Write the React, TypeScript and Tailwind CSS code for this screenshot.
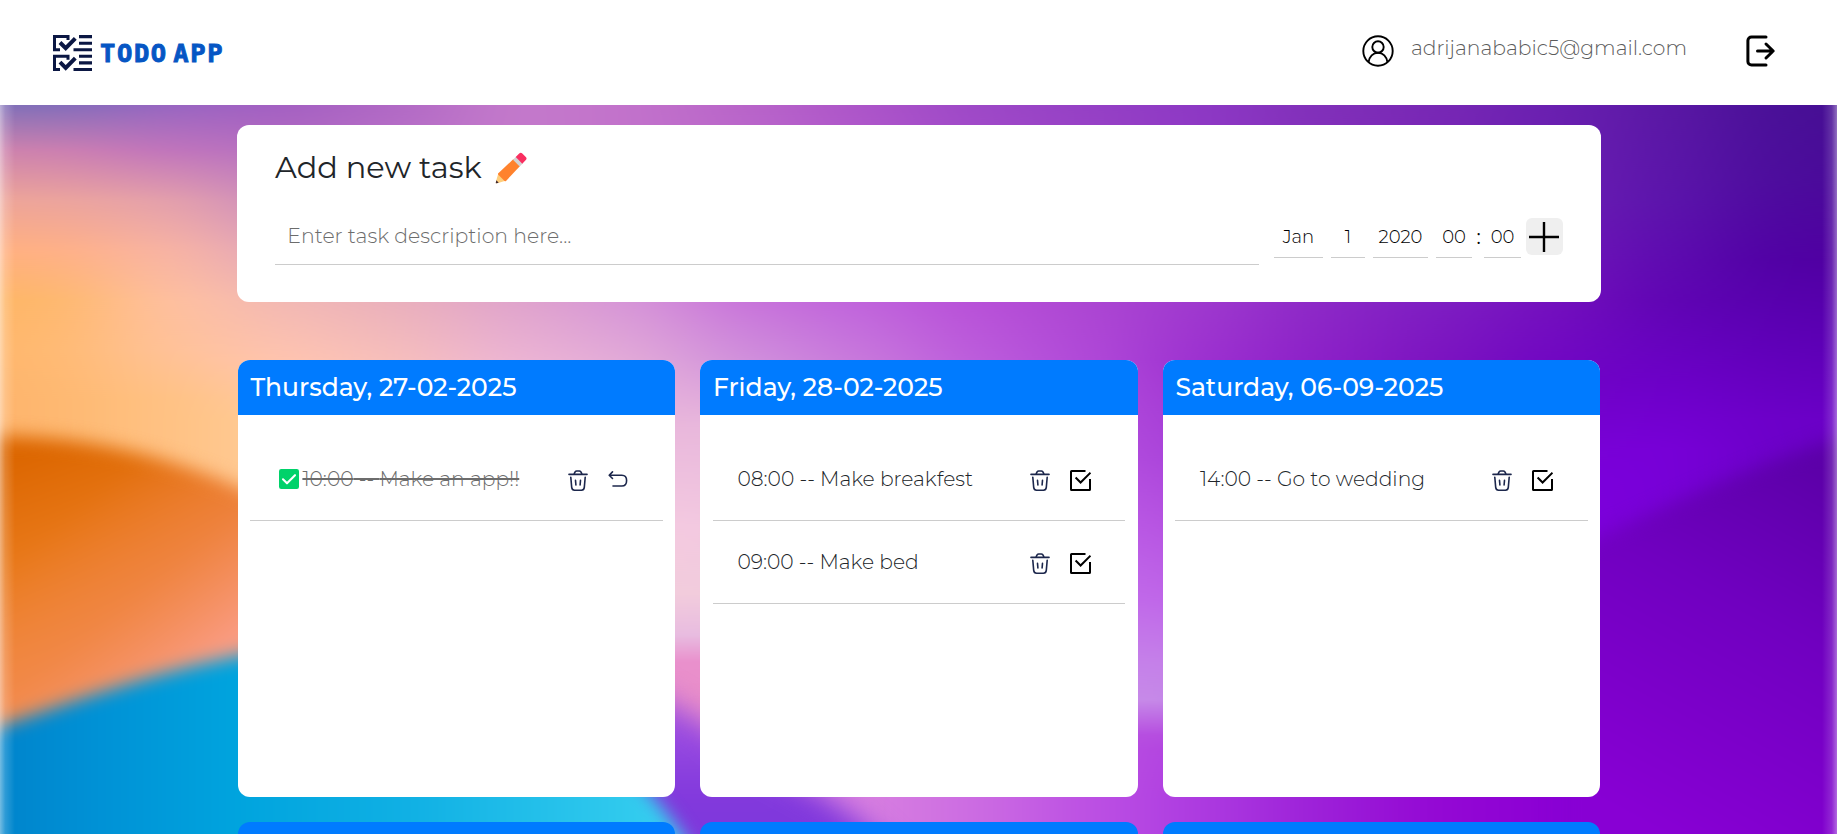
import { type ReactNode } from "react";

/* Colour columns of the backdrop: x centre and vertical colour stops. */
const COLUMNS: { x: number; stops: [number, string][] }[] = [
  { x: -60, stops: [[100, "#7670b8"], [150, "#cc84a8"], [200, "#eea494"], [250, "#ffb07c"], [300, "#feb462"], [350, "#ffb468"], [400, "#fdb068"]] },
  { x: 55, stops: [[100, "#7a6cba"], [150, "#cc80b0"], [200, "#eca49c"], [250, "#ffb085"], [300, "#feb86c"], [350, "#ffba72"], [400, "#feb870"]] },
  { x: 170, stops: [[100, "#9464c2"], [150, "#c074bc"], [200, "#e4a0ac"], [250, "#f8b4a4"], [300, "#ffc0a0"], [350, "#ffc298"], [400, "#ffc284"]] },
  { x: 285, stops: [[100, "#a25ec2"], [125, "#aa64c2"], [250, "#e0a4bc"], [300, "#f2b8b4"], [360, "#ffc4b0"], [420, "#ffcc98"]] },
  { x: 400, stops: [[100, "#b068c4"], [125, "#b46cc6"], [250, "#dca0c0"], [302, "#eab0bc"], [360, "#f6bebc"]] },
  { x: 515, stops: [[100, "#c47acb"], [125, "#c47acb"], [250, "#d498d0"], [302, "#e0a4cc"], [360, "#ecb4d4"]] },
  { x: 630, stops: [[100, "#c272cb"], [125, "#c272cb"], [250, "#cc84d0"], [302, "#d696d8"], [360, "#e2aad8"], [526, "#f4cae0"], [594, "#f2ccdc"], [635, "#e8bce0"], [662, "#ea90cc"], [800, "#e88cc8"]] },
  { x: 745, stops: [[100, "#b864c8"], [302, "#c874da"], [360, "#d090dc"], [425, "#e8b8dc"], [526, "#f2c8e0"], [594, "#f2ccdc"], [635, "#e8bce0"], [662, "#e890cc"], [700, "#e88cc8"], [800, "#dc84e0"]] },
  { x: 860, stops: [[100, "#ac54c8"], [302, "#c064dc"], [360, "#c878dc"], [700, "#e08cdc"], [800, "#d880e0"]] },
  { x: 975, stops: [[100, "#9c48c6"], [302, "#b850d8"], [360, "#bc5cdc"], [700, "#d080e0"], [800, "#cc6ce2"]] },
  { x: 1090, stops: [[100, "#9440c4"], [302, "#ac46d2"], [360, "#b048d8"], [459, "#b450de"], [526, "#bc5ce6"], [600, "#c26cea"], [662, "#c680ea"], [700, "#c88ae8"], [735, "#b850e0"], [800, "#bc50e4"]] },
  { x: 1205, stops: [[100, "#8c38c4"], [302, "#9e38ce"], [360, "#9c30d0"], [459, "#a840da"], [526, "#b450e0"], [600, "#be64e8"], [662, "#c480e8"], [700, "#c488e8"], [735, "#b44ce0"], [750, "#b040e0"], [800, "#ac3ae0"]] },
  { x: 1320, stops: [[100, "#8030b8"], [302, "#8c28c6"], [360, "#8c20c8"], [800, "#9c20d8"]] },
  { x: 1435, stops: [[100, "#7828b4"], [302, "#7e1ec2"], [360, "#7c14c0"], [800, "#9408d4"]] },
  { x: 1550, stops: [[100, "#6a20b0"], [200, "#6c1eb4"], [302, "#7410be"], [380, "#7004c4"], [480, "#7c00dc"], [800, "#8c00d4"]] },
  { x: 1665, stops: [[100, "#5a18a4"], [200, "#5c14ac"], [302, "#6004b4"], [380, "#6c00c8"], [450, "#7800d8"]] },
  { x: 1780, stops: [[100, "#481096"], [180, "#4c0c9c"], [260, "#5000a4"], [330, "#5c00b4"], [420, "#6c00c8"]] },
  { x: 1895, stops: [[100, "#440e90"], [180, "#480898"], [260, "#5000a0"], [330, "#5800b0"], [420, "#6800c4"]] },
];

function Backdrop() {
  return (
    <svg className="absolute inset-0 h-[834px] w-full" viewBox="0 0 1837 834" preserveAspectRatio="none" aria-hidden="true">
      <defs>
        {COLUMNS.map((c, i) => (
          <linearGradient key={i} id={`col${i}`} gradientUnits="userSpaceOnUse" x1="0" x2="0" y1="0" y2="834">
            {c.stops.map(([y, color]) => (
              <stop key={y} offset={y / 834} stopColor={color} />
            ))}
          </linearGradient>
        ))}
        <linearGradient id="hill" gradientUnits="userSpaceOnUse" x1="60" y1="440" x2="150" y2="700">
          <stop offset="0" stopColor="#dc6600" />
          <stop offset="0.35" stopColor="#e87818" />
          <stop offset="0.8" stopColor="#f38e3c" />
          <stop offset="1" stopColor="#f49850" />
        </linearGradient>
        <linearGradient id="hillPink" gradientUnits="userSpaceOnUse" x1="120" y1="470" x2="250" y2="630">
          <stop offset="0" stopColor="#f08050" stopOpacity="0" />
          <stop offset="0.5" stopColor="#f08450" stopOpacity="0.55" />
          <stop offset="1" stopColor="#fa9c84" stopOpacity="1" />
        </linearGradient>
        <linearGradient id="sea" gradientUnits="userSpaceOnUse" x1="0" y1="0" x2="680" y2="0">
          <stop offset="0" stopColor="#0084cc" />
          <stop offset="0.15" stopColor="#0092d6" />
          <stop offset="0.35" stopColor="#00a4de" />
          <stop offset="0.6" stopColor="#10b0e4" />
          <stop offset="0.8" stopColor="#24c0ea" />
          <stop offset="1" stopColor="#38d0f0" />
        </linearGradient>
        <linearGradient id="violet" gradientUnits="userSpaceOnUse" x1="0" y1="700" x2="0" y2="800">
          <stop offset="0" stopColor="#a858dc" />
          <stop offset="0.4" stopColor="#9648e0" />
          <stop offset="1" stopColor="#8038dc" />
        </linearGradient>
        <linearGradient id="dusk" gradientUnits="userSpaceOnUse" x1="1790" y1="450" x2="1600" y2="800">
          <stop offset="0" stopColor="#5c00a8" />
          <stop offset="0.4" stopColor="#7000c0" />
          <stop offset="1" stopColor="#8800d4" />
        </linearGradient>
        <linearGradient id="edgeL">
          <stop offset="0" stopColor="#fff" stopOpacity="0.45" />
          <stop offset="0.35" stopColor="#fff" stopOpacity="0.18" />
          <stop offset="1" stopColor="#fff" stopOpacity="0" />
        </linearGradient>
        <linearGradient id="edgeR" x1="1" x2="0">
          <stop offset="0" stopColor="#fff" stopOpacity="0.4" />
          <stop offset="0.35" stopColor="#fff" stopOpacity="0.15" />
          <stop offset="1" stopColor="#fff" stopOpacity="0" />
        </linearGradient>
        <filter id="mix" filterUnits="userSpaceOnUse" x="-120" y="0" width="2077" height="834" colorInterpolationFilters="sRGB">
          <feGaussianBlur stdDeviation="45 0" />
        </filter>
        <filter id="soft" filterUnits="userSpaceOnUse" x="-120" y="300" width="2077" height="660" colorInterpolationFilters="sRGB">
          <feGaussianBlur stdDeviation="9" />
        </filter>
        <filter id="softer" filterUnits="userSpaceOnUse" x="500" y="600" width="600" height="400" colorInterpolationFilters="sRGB">
          <feGaussianBlur stdDeviation="14" />
        </filter>
      </defs>
      <g filter="url(#mix)">
        {COLUMNS.map((c, i) => (
          <rect key={i} x={c.x - 58} y="0" width="117" height="834" fill={`url(#col${i})`} />
        ))}
      </g>
      <path filter="url(#softer)" d="M560 640 C640 690 690 705 735 750 C780 775 845 795 910 870 L560 870 Z" fill="url(#violet)" />
      <g filter="url(#soft)">
        <path d="M-60 436 C60 432 150 446 260 497 L460 600 L460 900 L-60 900 Z" fill="url(#hill)" />
        <path d="M-60 436 C60 432 150 446 260 497 L460 600 L460 900 L-60 900 Z" fill="url(#hillPink)" />
        <path d="M-60 745 C40 716 140 670 290 646 C440 640 600 700 692 850 L692 900 L-60 900 Z" fill="url(#sea)" />
        <path d="M1560 556 C1640 518 1740 466 1900 418 L1960 418 L1960 900 L1560 900 Z" fill="url(#dusk)" />
      </g>
      <rect x="0" y="100" width="15" height="734" fill="url(#edgeL)" />
      <rect x="1822" y="100" width="15" height="734" fill="url(#edgeR)" />
    </svg>
  );
}

function LogoMark() {
  return (
    <svg className="h-9 w-[39px]" viewBox="0 0 39 36" fill="none" stroke="#0b1743">
      {[0, 19.7].map((y) => (
        <g key={y} transform={`translate(0 ${y})`}>
          <path d="M15 5V1.5H1.500V14.800H7" strokeWidth="3" />
          <path d="M7 7.500l5.700 5.700L22.300 3.400" strokeWidth="4" />
          <path d="M26 1.600h13M26 8.200h13M20.500 14.800h18.500" strokeWidth="3.100" />
        </g>
      ))}
    </svg>
  );
}

function UserIcon() {
  return (
    <svg className="size-8" viewBox="0 0 32 32" fill="none" stroke="#000" strokeWidth="1.9">
      <circle cx="16" cy="16" r="14.7" />
      <circle cx="16" cy="12" r="5.7" />
      <path d="M6.6 27c.6-5.300 4.500-9.300 9.400-9.300s8.800 4 9.400 9.300" />
    </svg>
  );
}

function LogoutIcon() {
  return (
    <svg className="h-8 w-[30px]" viewBox="0 0 30 32" fill="none" stroke="#000" strokeWidth="3" strokeLinecap="round" strokeLinejoin="round">
      <path d="M20 1.900H5.500a3.600 3.600 0 0 0-3.600 3.600v21a3.600 3.600 0 0 0 3.600 3.600H20" />
      <path d="M11.500 16H27M20 9l7.200 7-7.200 7" />
    </svg>
  );
}

function PencilIcon() {
  return (
    <svg className="size-8" viewBox="0 0 32 32">
      <path d="M3.300 21.500l7.200 7.200L3.200 31l-1.800.3a.5.5 0 0 1-.6-.6L1.100 29z" fill="#ffce7c" />
      <path d="M1.400 28.300l2.300 2.400-2 .6c-.6.100-1-.3-.9-.9z" fill="#402a32" />
      <path d="M18.500 7.100l6.800 6.700L11 28.900a1 1 0 0 1-1.400 0l-6.300-6.200a1 1 0 0 1 0-1.400z" fill="#ff822d" />
      <path d="M21 4.700l6.700 6.700-3 3-6.700-6.700z" fill="#d3d3d3" />
      <path d="M20.700 5l3.500-3.500a2.200 2.200 0 0 1 3.100 0l3.500 3.500a2.200 2.200 0 0 1 0 3.100l-3.500 3.600z" fill="#f92f60" />
    </svg>
  );
}

function DoneBadge() {
  return (
    <svg className="size-5 shrink-0" viewBox="0 0 20 20">
      <rect width="20" height="20" rx="2.200" fill="#00d26a" />
      <path d="M4 10.300l4 4L16 6.200" fill="none" stroke="#fff" strokeWidth="2.100" strokeLinecap="round" strokeLinejoin="round" />
    </svg>
  );
}

function TrashIcon() {
  return (
    <svg className="h-[21px] w-5" viewBox="0 0 20 21" fill="none" stroke="#1c274c" strokeWidth="1.600" strokeLinecap="round">
      <path d="M1 4.400h18" />
      <path d="M6.100 4.200C6.600 2 7.500 1 8.600 1h2.800c1.100 0 2 1 2.500 3.200" />
      <path d="M2.800 7.200l.9 10.200c.2 1.900 1 2.800 2.900 2.800h6.800c1.900 0 2.700-.9 2.900-2.800l.9-10.200" />
      <path d="M7.500 10.400l.4 4.600M12.500 10.400l-.4 4.600" />
    </svg>
  );
}

function CheckIcon() {
  return (
    <svg className="size-[21px]" viewBox="0 0 21 21" fill="none" stroke="#000" strokeWidth="2">
      <path d="M15.500 1H1.600a.6.600 0 0 0-.6.600v17.800c0 .3.300.600.600.600h17.800c.3 0 .6-.3.600-.600V9" />
      <path d="M5.600 7.500l5 5L20.500 2.700" />
    </svg>
  );
}

function UndoIcon() {
  return (
    <svg className="h-[21px] w-5" viewBox="0 0 20 21" fill="none" stroke="#1c274c" strokeWidth="1.600" strokeLinecap="round" strokeLinejoin="round">
      <path d="M4.500 1.900L1.200 5.200l3.300 3.300M1.500 5.200h12.300c3.500 0 4.800 1.700 4.800 5.200s-1.300 5.600-4.800 5.600H5" />
    </svg>
  );
}

function Field({ className, children }: { className: string; children: ReactNode }) {
  return (
    <div className={`flex h-10 items-center justify-center border-b border-[#ccc] pl-px text-[18px] font-light text-black ${className}`}>
      {children}
    </div>
  );
}

type Task = { time: string; title: string; done?: boolean };

function TaskRow({ task }: { task: Task }) {
  return (
    <li className="flex h-[83.2px] items-center border-b border-[#ccc] pr-[34.5px] pl-[24.5px] first:h-[83px]">
      <div className={`flex flex-1 items-center text-[20.25px] leading-6 ${task.done ? "pl-1" : ""}`}>
        {task.done && <DoneBadge />}
        <span className={`whitespace-pre font-light ${task.done ? "ml-[3.5px] text-[#6c6c6c] line-through decoration-2" : "text-[#212529]"}`}>
          {task.time} -- {task.title}
        </span>
      </div>
      <div className="mt-[3px] flex gap-5">
        <button type="button" aria-label="Delete"><TrashIcon /></button>
        <button type="button" aria-label={task.done ? "Undo" : "Complete"}>{task.done ? <UndoIcon /> : <CheckIcon />}</button>
      </div>
    </li>
  );
}

const DAYS: { label: string; tasks: Task[] }[] = [
  { label: "Thursday, 27-02-2025", tasks: [{ time: "10:00", title: "Make an app!!", done: true }] },
  {
    label: "Friday, 28-02-2025",
    tasks: [
      { time: "08:00", title: "Make breakfest" },
      { time: "09:00", title: "Make bed" },
    ],
  },
  { label: "Saturday, 06-09-2025", tasks: [{ time: "14:00", title: "Go to wedding" }] },
];

export default function App() {
  return (
    <div className="relative h-[834px] w-full overflow-hidden bg-white font-['Montserrat','Inter','Noto_Sans',sans-serif]">
      <Backdrop />
      <header className="relative flex h-[105px] items-start justify-between bg-white pt-[34px] pr-[61px] pl-[53px]">
        <div className="flex items-center gap-2 pt-px">
          <LogoMark />
          <span className="font-['DejaVu_Sans_Mono',monospace] text-[25.5px] leading-9 font-bold tracking-[1.6px] text-[#0656c4] [word-spacing:-11.5px] [-webkit-text-stroke:0.9px_#0656c4]">TODO APP</span>
        </div>
        <div className="flex items-start pt-px">
          <UserIcon />
          <span className="ml-[17px] text-[20.3px] leading-[26px] font-light text-[#5c5c5c]">adrijanababic5@gmail.com</span>
          <button type="button" aria-label="Log out" className="ml-[59px]"><LogoutIcon /></button>
        </div>
      </header>

      <main className="relative mx-auto w-[1364px] pt-5">
        <section className="h-[177px] rounded-xl bg-white px-[38px] pt-[21px]">
          <h1 className="flex h-[44px] items-center text-[30.4px] text-[#212529]">
            <span className="ml-[0.5px]">Add new task</span>
            <span className="ml-[13px]"><PencilIcon /></span>
          </h1>
          <div className="flex items-start pt-5">
            <div className="flex h-[55px] w-[984px] items-center border-b border-[#ccc] pb-px pl-[12.8px] text-[20.4px] font-light text-[#6c6c6c]">Enter task description here...</div>
            <div className="ml-[15px] flex pt-[8px]">
              <Field className="w-[49px]">Jan</Field>
              <Field className="ml-2 w-[34px]">1</Field>
              <Field className="ml-2 w-[55px]">2020</Field>
              <Field className="ml-2 w-9">00</Field>
              <span className="w-3 pt-1 pl-[5px] text-[20px]">:</span>
              <Field className="w-[37px]">00</Field>
            </div>
            <button type="button" aria-label="Add task" className="mt-[8px] ml-[5px] flex size-[37px] items-center justify-center rounded-md bg-[#efefef]">
              <svg className="size-[30px]" viewBox="0 0 30 30" stroke="#000" strokeWidth="2.4"><path d="M15 0v30M0 15h30" /></svg>
            </button>
          </div>
        </section>

        <section className="mt-[58px] ml-[1.4px] grid w-[1362.5px] grid-cols-3 gap-[25px]">
          {DAYS.map((day) => (
            <article key={day.label} className="h-[437px] overflow-hidden rounded-xl bg-white">
              <h2 className="flex h-[55px] items-center bg-[#007bff] pl-[12.5px] text-[25px] font-medium text-white">{day.label}</h2>
              <ul className="px-[12.5px] pt-[23px]">
                {day.tasks.map((task) => (
                  <TaskRow key={task.title} task={task} />
                ))}
              </ul>
            </article>
          ))}
          {DAYS.map((day) => (
            <article key={`next-${day.label}`} className="h-[437px] overflow-hidden rounded-xl bg-[#007bff]" />
          ))}
        </section>
      </main>
    </div>
  );
}
